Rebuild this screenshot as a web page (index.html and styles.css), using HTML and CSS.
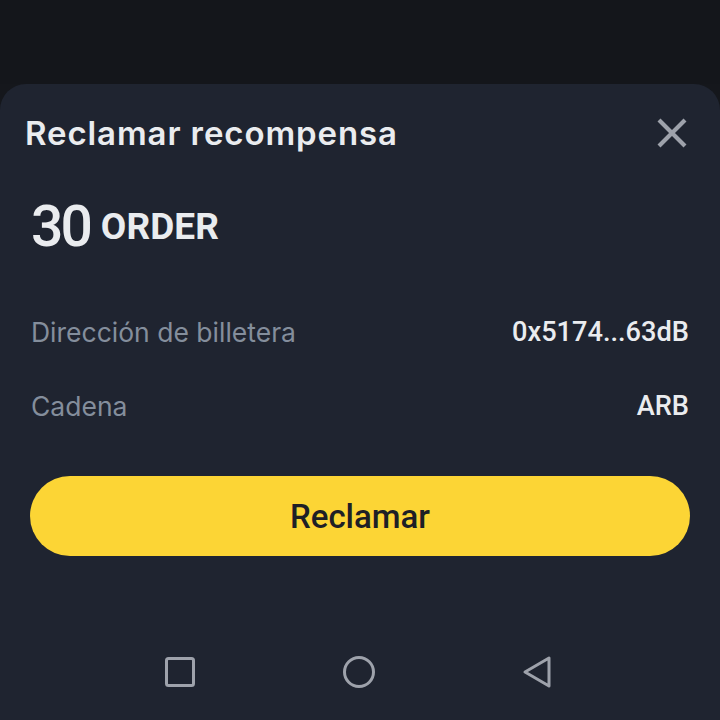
FILE: index.html
```html
<!DOCTYPE html>
<html lang="es">
<head>
<meta charset="utf-8">
<link rel="stylesheet" href="styles.css">
</head>
<body>
<div class="screen">
  <div class="backdrop"></div>
  <div class="sheet">
    <div class="header">
      <h1 class="title">Reclamar recompensa</h1>
      <button class="close" aria-label="Cerrar">
        <svg width="32" height="32" viewBox="0 0 32 32"><path d="M3 3 L29 29 M29 3 L3 29" stroke="#9ea2ab" stroke-width="4.2" stroke-linecap="butt"/></svg>
      </button>
    </div>
    <div class="amount">
      <span class="num">30</span><span class="unit">ORDER</span>
    </div>
    <div class="rows">
      <div class="row"><span class="label">Dirección de billetera</span><span class="value">0x5174...63dB</span></div>
      <div class="row"><span class="label">Cadena</span><span class="value">ARB</span></div>
    </div>
    <button class="cta">Reclamar</button>
    <div class="spacer"></div>
    <nav class="navbar">
      <svg width="32" height="32" viewBox="0 0 32 32"><rect x="2.5" y="2.5" width="27" height="27" rx="2" fill="none" stroke="#9ea2ab" stroke-width="3"/></svg>
      <svg width="34" height="34" viewBox="0 0 34 34"><circle cx="17" cy="17" r="14.5" fill="none" stroke="#9ea2ab" stroke-width="3"/></svg>
      <svg width="32" height="34" viewBox="0 0 32 34"><path d="M27 3 L27 31 L3 17 Z" fill="none" stroke="#9ea2ab" stroke-width="3" stroke-linejoin="round"/></svg>
    </nav>
  </div>
</div>
</body>
</html>
```

FILE: styles.css
```css
* { box-sizing: border-box; }
html, body { margin: 0; padding: 0; }
body {
  width: 720px;
  height: 720px;
  overflow: hidden;
  background: #15171c;
  font-family: "Inter", "Roboto", sans-serif;
}
.screen {
  display: flex;
  flex-direction: column;
  height: 720px;
}
.backdrop {
  height: 84px;
  flex: none;
  background: #14161b;
}
.sheet {
  flex: 1;
  background: #1f2430;
  border-radius: 26px 26px 0 0;
  display: flex;
  flex-direction: column;
  padding: 0 30px 0 30px;
}
.header {
  display: flex;
  align-items: center;
  justify-content: space-between;
  height: 96px;
  padding-top: 2px;
}
.title {
  margin: 0 0 0 -5px;
  font-family: "Inter", sans-serif;
  font-size: 33px;
  font-weight: 600;
  color: #eaecef;
  letter-spacing: 0.9px;
}
.close {
  background: none;
  border: 0;
  padding: 0;
  width: 32px;
  height: 32px;
  margin-right: 2px;
  display: flex;
}
.amount {
  display: flex;
  align-items: center;
  height: 92px;
  padding-top: 0;
}
.num {
  font-family: "Roboto", sans-serif;
  font-size: 57px;
  line-height: 1;
  font-weight: 500;
  color: #eaecef;
  letter-spacing: -3px;
  margin-left: 1px;
  margin-right: 11px;
}
.unit {
  font-family: "Roboto", sans-serif;
  font-size: 37px;
  line-height: 1;
  font-weight: 700;
  color: #eaecef;
  letter-spacing: 0.1px;
}
.rows {
  display: flex;
  flex-direction: column;
  padding-top: 23px;
}
.row {
  display: flex;
  justify-content: space-between;
  align-items: center;
  height: 74px;
}
.label {
  font-family: "Inter", sans-serif;
  font-size: 26.5px;
  color: #848e9c;
  margin-left: 1px;
}
.value {
  font-family: "Roboto", sans-serif;
  font-size: 27.2px;
  font-weight: 500;
  color: #eaecef;
  margin-right: 1px;
}
.cta {
  margin-top: 33px;
  height: 80px;
  border: 0;
  border-radius: 40px;
  background: #fcd535;
  color: #1e2026;
  font-family: "Roboto", sans-serif;
  font-size: 33px;
  font-weight: 500;
  width: 100%;
}
.spacer { flex: 1; }
.navbar {
  display: flex;
  justify-content: space-between;
  align-items: center;
  height: 96px;
  padding: 0 136px 0 134px;
}
```
